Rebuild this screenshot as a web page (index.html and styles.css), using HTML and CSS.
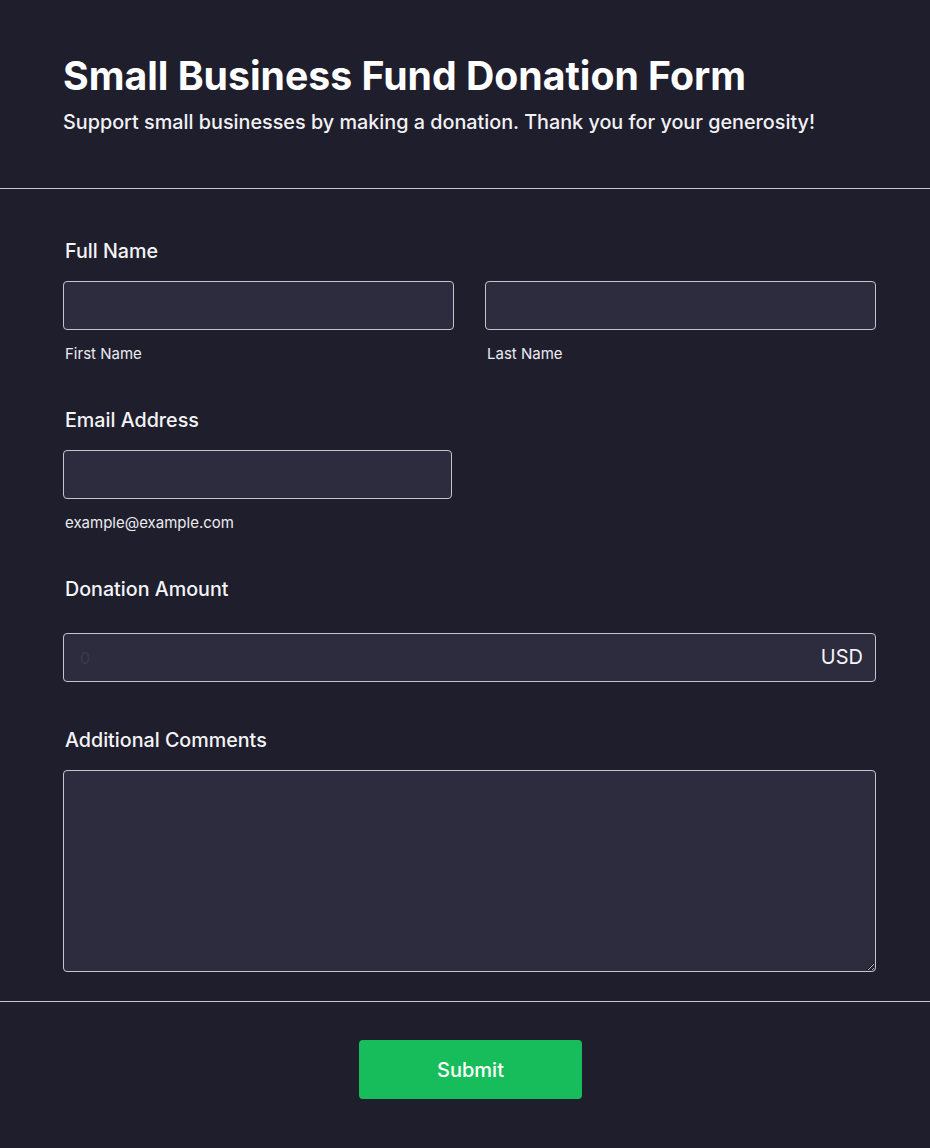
FILE: index.html
```html
<!DOCTYPE html>
<html lang="en">
<head>
	<meta charset="UTF-8">
	<title>Small Business Fund Donation Form</title>
	<link rel="stylesheet" href="styles.css">
</head>
<body>
	<div class="header">
		<h1>Small Business Fund Donation Form</h1>
		<p>Support small businesses by making a donation. Thank you for your generosity!</p>
	</div>
	<form class="form">
		<div class="field">
			<label class="label">Full Name</label>
			<div class="row">
				<div class="col">
					<input type="text" class="input">
					<span class="sub">First Name</span>
				</div>
				<div class="col">
					<input type="text" class="input">
					<span class="sub">Last Name</span>
				</div>
			</div>
		</div>
		<div class="field">
			<label class="label">Email Address</label>
			<div class="col half">
				<input type="email" class="input">
				<span class="sub">example@example.com</span>
			</div>
		</div>
		<div class="field amount">
			<label class="label">Donation Amount</label>
			<div class="money">
				<input type="text" class="input" placeholder="0">
				<span class="cur">USD</span>
			</div>
		</div>
		<div class="field comments">
			<label class="label">Additional Comments</label>
			<textarea class="input area"></textarea>
		</div>
	</form>
	<div class="footer">
		<button type="button" class="submit">Submit</button>
	</div>
</body>
</html>
```

FILE: styles.css
```css
* { margin: 0; padding: 0; box-sizing: border-box;}
body { background: #1f1e2d; color: #fff; font-family: Inter, "Noto Sans", sans-serif;}
.header { padding: 53px 54px 54px 63px; border-bottom: 1px solid #c9c9d1;}
.header h1 { font-size: 39.2px; font-weight: 700; line-height: 46px;}
.header p { font-size: 19.8px; font-weight: 500; line-height: 24px; margin-top: 11px; color: #f2f2f5;}
.form { padding: 50px 54px 29px 63px; border-bottom: 1px solid #c9c9d1;}
.field { margin-bottom: 45px;}
.field:last-child { margin-bottom: 0;}
.label { display: block; font-size: 19.7px; font-weight: 500; line-height: 24px; padding-left: 2px; margin-bottom: 18px; color: #f4f4f6;}
.row { display: flex; gap: 31px;}
.col { flex: 1; display: flex; flex-direction: column;}
.col.half { width: 389px; flex: none;}
.input { display: block; width: 100%; height: 49px; background: #2d2c3f; border: 1px solid #c4c4cc; border-radius: 4px; color: #fff; font-family: inherit; font-size: 16px; padding: 0 16px; outline: none;}
.input::placeholder { color: #3a394c;}
.sub { font-size: 15px; line-height: 18px; margin-top: 15px; padding-left: 2px; color: #ececf0;}
.amount { margin-bottom: 46px;}
.amount .label { margin-bottom: 32px;}
.money { position: relative;}
.cur { position: absolute; right: 13px; top: 12px; font-size: 20px; line-height: 24px; color: #f4f4f6;}
.area { height: 202px; resize: vertical; padding: 12px 16px;}
.footer { display: flex; justify-content: center; padding: 38px 0 49px 11px;}
.submit { width: 223px; height: 59px; background: #18bd5b; border: none; border-radius: 4px; color: #fff; font-family: inherit; font-size: 20px; font-weight: 500; cursor: pointer;}
```
